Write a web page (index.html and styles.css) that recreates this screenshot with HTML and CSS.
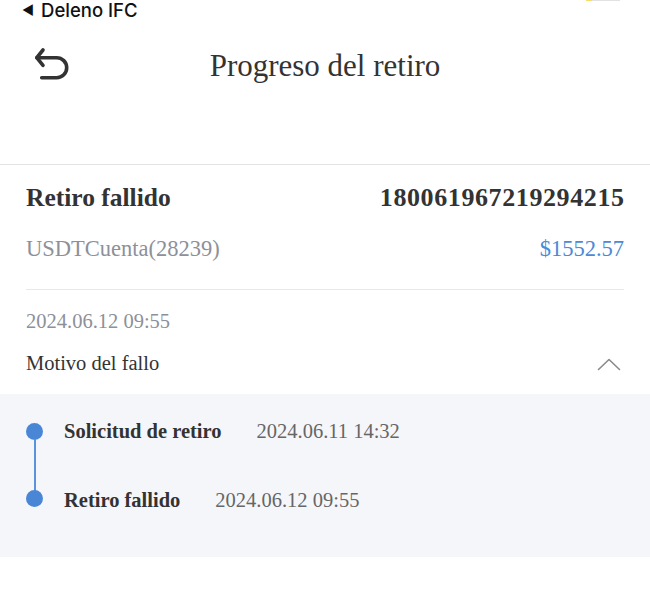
FILE: index.html
```html
<!DOCTYPE html>
<html lang="es">
<head>
<meta charset="utf-8">
<title>Progreso del retiro</title>
<link rel="stylesheet" href="styles.css">
</head>
<body>
<div class="status">
  <span class="status-back">&#9664;</span>
  <span class="status-app">Deleno IFC</span>
  <span class="battery"><span class="battery-fill"></span></span>
</div>
<header class="nav">
  <button class="back" aria-label="Volver">
    <svg width="36" height="34" viewBox="0 0 36 34" fill="none" stroke="#333" stroke-width="3.6" stroke-linecap="round" stroke-linejoin="round">
      <path d="M9 3 L2.8 10.7 L9 18.4"/>
      <path d="M2.8 10.7 H22.7 A10 10 0 0 1 22.7 30.7 H7.7"/>
    </svg>
  </button>
  <h1 class="title">Progreso del retiro</h1>
  <span></span>
</header>
<main class="card">
  <div class="row head-row">
    <span class="head">Retiro fallido</span>
    <span class="order">180061967219294215</span>
  </div>
  <div class="row sub-row">
    <span class="account">USDTCuenta(28239)</span>
    <span class="amount">$1552.57</span>
  </div>
  <div class="divider"></div>
  <div class="date">2024.06.12 09:55</div>
  <div class="row reason">
    <span>Motivo del fallo</span>
    <svg class="chev" width="26" height="14" viewBox="0 0 26 14" fill="none" stroke="#8a8a8a" stroke-width="1.6" stroke-linecap="round" stroke-linejoin="round">
      <path d="M2.5 12.5 L13 2.5 L23.5 12.5"/>
    </svg>
  </div>
</main>
<section class="progress">
  <div class="rail">
    <span class="dot"></span>
    <span class="line"></span>
    <span class="dot"></span>
  </div>
  <div class="steps">
    <div class="step"><span class="step-name">Solicitud de retiro</span><span class="step-date">2024.06.11 14:32</span></div>
    <div class="step"><span class="step-name">Retiro fallido</span><span class="step-date">2024.06.12 09:55</span></div>
  </div>
</section>
</body>
</html>
```
FILE: styles.css
```css
html, body {
  margin: 0;
  padding: 0;
  background: #fff;
}
body {
  font-family: "Liberation Serif", "Times New Roman", serif;
  color: #333;
  width: 650px;
}
.status {
  height: 20px;
  display: flex;
  align-items: flex-start;
  padding-left: 22px;
  font-family: "Inter", "Liberation Sans", sans-serif;
  font-weight: 500;
  color: #111;
  font-size: 18.5px;
  line-height: 21px;
}
.status-back {
  font-size: 13px;
  margin-right: 7px;
  line-height: 21px;
}
.battery {
  margin-left: auto;
  margin-right: 30px;
  width: 34px;
  height: 1px;
  background: #e2e2e2;
  display: flex;
}
.battery-fill {
  width: 6px;
  background: #f4dc70;
}
.nav {
  display: grid;
  grid-template-columns: 1fr auto 1fr;
  align-items: center;
  height: 92px;
  padding-bottom: 52px;
  border-bottom: 1px solid #e4e4e4;
}
.back {
  border: 0;
  background: none;
  padding: 0;
  margin-left: 34px;
  margin-top: -5px;
  width: 36px;
  height: 34px;
  justify-self: start;
  display: flex;
}
.title {
  margin: 0;
  font-weight: normal;
  font-size: 31px;
  color: #333;
}
.card {
  padding: 0 26px;
}
.row {
  display: flex;
  justify-content: space-between;
  align-items: center;
}
.head-row {
  margin-top: 16px;
  height: 34px;
}
.head {
  font-weight: bold;
  font-size: 25.5px;
}
.order {
  font-weight: bold;
  font-size: 26px;
  letter-spacing: 0.6px;
  margin-right: -0.6px;
}
.sub-row {
  margin-top: 19px;
  height: 30px;
  font-size: 22.5px;
}
.account {
  color: #8d9099;
}
.amount {
  color: #4a8ad8;
  font-size: 22.5px;
}
.divider {
  margin-top: 25px;
  height: 1px;
  background: #e6e8ef;
}
.date {
  margin-top: 18px;
  height: 26px;
  line-height: 26px;
  font-size: 20.5px;
  color: #8d9099;
}
.reason {
  margin-top: 15px;
  height: 28px;
  font-size: 20.5px;
  color: #333;
  padding-bottom: 17px;
}
.chev {
  margin-right: 2px;
  margin-top: 2px;
}
.progress {
  background: #f5f6fa;
  display: flex;
  gap: 21px;
  padding: 22px 26px 42px;
}
.rail {
  display: flex;
  flex-direction: column;
  align-items: center;
  padding-top: 6.5px;
  width: 17px;
}
.dot {
  width: 17px;
  height: 17px;
  border-radius: 50%;
  background: #4a86d6;
  flex: none;
}
.line {
  width: 2px;
  height: 52px;
  background: #5a93dd;
  margin: -1px 0;
}
.steps {
  display: flex;
  flex-direction: column;
  gap: 39px;
}
.step {
  height: 30px;
  display: flex;
  align-items: center;
  gap: 35px;
  font-size: 20.5px;
}
.step-name {
  font-weight: bold;
  color: #333;
}
.step-date {
  color: #666;
}
```
